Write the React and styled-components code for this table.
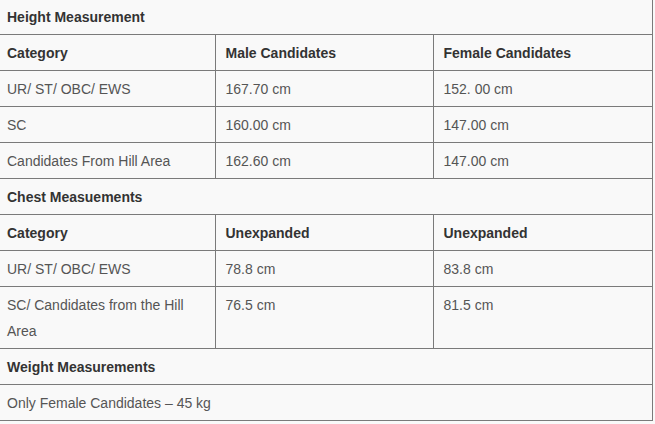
import React from "react";
import styled, { createGlobalStyle } from "styled-components";

const GlobalStyle = createGlobalStyle`
  html, body {
    margin: 0;
    padding: 0;
    background: #f9f9f9;
  }
`;

const Table = styled.table`
  border-collapse: collapse;
  table-layout: fixed;
  width: 652px;
  margin-top: -1px;
  font-family: "Liberation Sans", Arial, sans-serif;
  font-size: 14px;
  line-height: 26px;
  color: #555;
  background: #f9f9f9;
`;

const Cell = styled.td`
  border: 1px solid #7a7a7a;
  border-top: none;
  border-left: ${(p) => (p.$first ? "none" : "1px solid #7a7a7a")};
  padding: 5px 10px 4px ${(p) => (p.$first ? "7px" : "10px")};
  vertical-align: top;
  text-align: left;
  font-weight: ${(p) => (p.$bold ? 700 : 400)};
  color: ${(p) => (p.$bold ? "#333" : "#555")};
`;

const sections = [
  {
    title: "Height Measurement",
    head: ["Category", "Male Candidates", "Female Candidates"],
    rows: [
      ["UR/ ST/ OBC/ EWS", "167.70 cm", "152. 00 cm"],
      ["SC", "160.00 cm", "147.00 cm"],
      ["Candidates From Hill Area", "162.60 cm", "147.00 cm"],
    ],
  },
  {
    title: "Chest Measuements",
    head: ["Category", "Unexpanded", "Unexpanded"],
    rows: [
      ["UR/ ST/ OBC/ EWS", "78.8 cm", "83.8 cm"],
      ["SC/ Candidates from the Hill Area", "76.5 cm", "81.5 cm"],
    ],
  },
];

export default function App() {
  return (
    <>
      <GlobalStyle />
      <Table>
        <colgroup>
          <col style={{ width: 215 }} />
          <col style={{ width: 218 }} />
          <col style={{ width: 219 }} />
        </colgroup>
        <tbody>
          {sections.map((s) => (
            <React.Fragment key={s.title}>
              <tr>
                <Cell $first $bold colSpan={3}>
                  {s.title}
                </Cell>
              </tr>
              <tr>
                {s.head.map((h, i) => (
                  <Cell key={i} $first={i === 0} $bold>
                    {h}
                  </Cell>
                ))}
              </tr>
              {s.rows.map((r, ri) => (
                <tr key={ri}>
                  {r.map((c, i) => (
                    <Cell key={i} $first={i === 0}>
                      {c}
                    </Cell>
                  ))}
                </tr>
              ))}
            </React.Fragment>
          ))}
          <tr>
            <Cell $first $bold colSpan={3}>
              Weight Measurements
            </Cell>
          </tr>
          <tr>
            <Cell $first colSpan={3}>
              Only Female Candidates – 45 kg
            </Cell>
          </tr>
        </tbody>
      </Table>
    </>
  );
}
